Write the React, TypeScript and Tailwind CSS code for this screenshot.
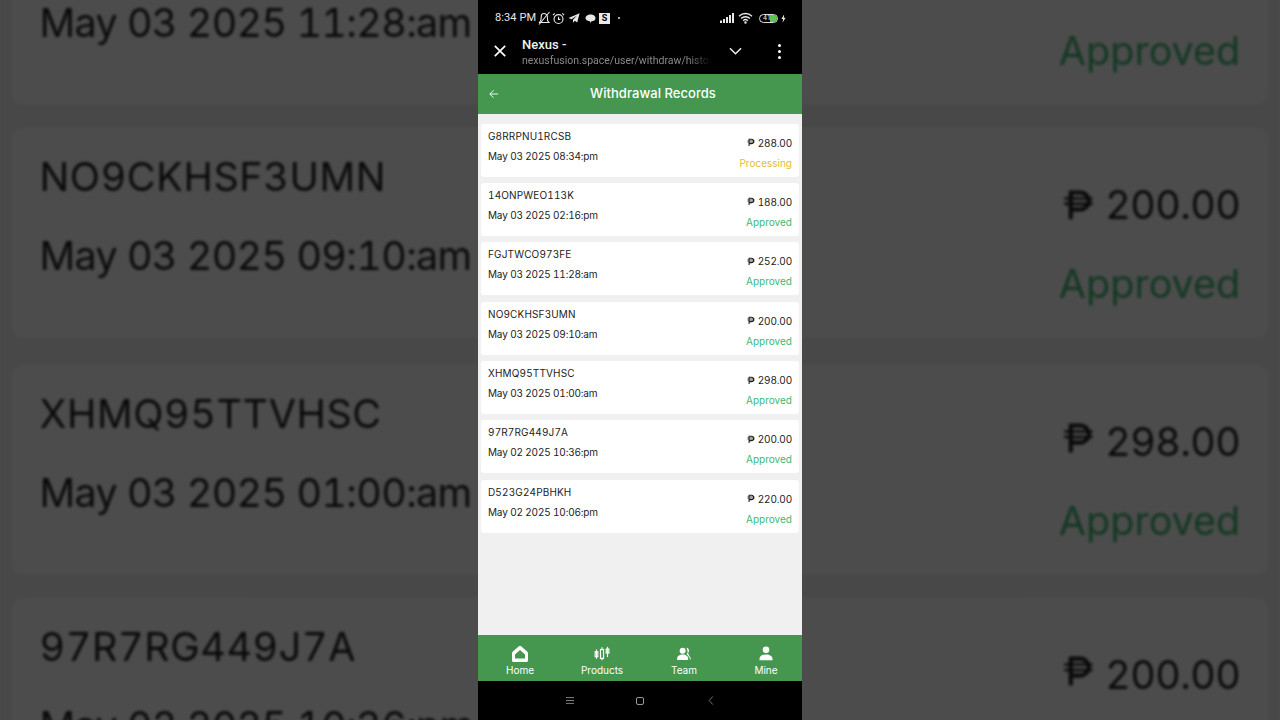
import React from "react";

const rows = [
  ["G8RRPNU1RCSB", "May 03 2025 08:34:pm", "288.00", "Processing"],
  ["14ONPWEO113K", "May 03 2025 02:16:pm", "188.00", "Approved"],
  ["FGJTWCO973FE", "May 03 2025 11:28:am", "252.00", "Approved"],
  ["NO9CKHSF3UMN", "May 03 2025 09:10:am", "200.00", "Approved"],
  ["XHMQ95TTVHSC", "May 03 2025 01:00:am", "298.00", "Approved"],
  ["97R7RG449J7A", "May 02 2025 10:36:pm", "200.00", "Approved"],
  ["D523G24PBHKH", "May 02 2025 10:06:pm", "220.00", "Approved"],
];

function Peso() {
  return (
    <svg viewBox="0 0 10 10" className="w-[8px] h-[9px]" fill="none" stroke="currentColor">
      <path d="M2.6 9.5V1h3a2.6 2.6 0 0 1 0 5.4h-3" strokeWidth="1.3" />
      <path d="M0.5 2.9h9M0.5 4.6h9" strokeWidth="0.8" />
    </svg>
  );
}

function Records() {
  return (
    <div className="flex flex-col gap-[6.4px] px-[3px] font-['Inter','Liberation_Sans',sans-serif] text-[10px] text-[#1c1c1c] tabular-nums">
      {rows.map((r) => (
        <div key={r[0]} className="flex justify-between h-[53px] bg-white rounded-[3px] px-[7px]">
          <div className="flex flex-col gap-[6px] pt-[5px]">
            <div className="h-[14px] leading-[14px] whitespace-nowrap tracking-[0.15px]">{r[0]}</div>
            <div className="h-[14px] leading-[14px] whitespace-nowrap tracking-[-0.17px]">{r[1]}</div>
          </div>
          <div className="flex flex-col items-end gap-[6px] pt-[12px]">
            <div className="h-[14px] leading-[14px] flex items-center gap-[3px]">
              <Peso />
              <span className="tracking-[-0.15px]">{r[2]}</span>
            </div>
            <div className={"h-[14px] leading-[14px] " + (r[3] === "Processing" ? "text-[#e2bd2e]" : "text-[#3db873]")}>{r[3]}</div>
          </div>
        </div>
      ))}
    </div>
  );
}

function StatusBar() {
  return (
    <div className="h-[34px] flex items-center pl-[17px] pr-[16px] text-[#e8e8e8] pt-[2px]">
      <span className="w-[42px] text-[11px] tracking-[0.1px] font-['Roboto',sans-serif] whitespace-nowrap">8:34 PM</span>
      <svg viewBox="0 0 14 14" className="w-[14px] h-[14px]" fill="none" stroke="currentColor" strokeWidth="1.1">
        <path d="M2.500 11.500h9.500l-1.500-2V6a3.500 3.500 0 0 0-6-2.400L3.800 9.500z" />
        <path d="M2 13.500L12.500 1" />
      </svg>
      <svg viewBox="0 0 14 14" className="w-[13px] h-[13px] ml-[1px]" fill="none" stroke="currentColor" strokeWidth="1.2">
        <circle cx="7" cy="7.600" r="4.800" />
        <path d="M7 5v3h2M1 3.400L3 1.400M13 3.400L11 1.400" />
      </svg>
      <svg viewBox="0 0 12 12" className="w-[12px] h-[12px] ml-[3px]" fill="currentColor">
        <path d="M11.600 1.200L0.500 6l3 1.200L9 3.400 5 7.800v3l1.800-2 2.400 1.700z" />
      </svg>
      <svg viewBox="0 0 12 12" className="w-[11px] h-[11px] ml-[5px]" fill="currentColor">
        <path d="M6 1.500c3 0 5.500 1.700 5.500 4S9.500 9 7.200 9L5.500 11V9C2.800 8.800.500 7.600.500 5.500s2.500-4 5.500-4z" />
      </svg>
      <div className="ml-[3px] w-[11px] h-[11px] bg-[#e8e8e8] text-black text-[9px] font-bold leading-[11px] text-center font-['Roboto',sans-serif]">S</div>
      <div className="ml-[8px] w-[2px] h-[2px] rounded-full bg-[#ddd]" />
      <div className="flex-1" />
      <svg viewBox="0 0 14 10" className="w-[14px] h-[10px]" fill="currentColor">
        <rect x="0" y="7.500" width="2" height="2.500" />
        <rect x="3" y="6" width="2" height="4" />
        <rect x="6" y="4" width="2" height="6" />
        <rect x="9" y="2" width="2" height="8" />
        <rect x="12" y="0" width="2" height="10" />
      </svg>
      <svg viewBox="0 0 16 13" className="w-[15px] h-[12px] ml-[4px]" fill="none" stroke="currentColor" strokeWidth="1.500">
        <path d="M1 4.500a10 10 0 0 1 14 0M3.200 7a7 7 0 0 1 9.600 0M5.500 9.400a3.600 3.600 0 0 1 5 0" />
        <circle cx="8" cy="11.500" r="0.600" />
      </svg>
      <div className="ml-[6px] relative w-[19px] h-[9px] rounded-full border border-[#ddd] overflow-hidden flex items-center">
        <div className="absolute right-0 top-0 bottom-0 w-[7px] bg-[#57c84d]" />
        <span className="relative ml-[3px] text-[7px] leading-none font-['Roboto',sans-serif] text-[#eee]">41</span>
      </div>
      <svg viewBox="0 0 6 10" className="w-[5px] h-[9px] ml-[3px]" fill="currentColor">
        <path d="M3.800 0L0.500 5.600h2L1.800 10 5.500 4H3.400z" />
      </svg>
    </div>
  );
}

function BrowserBar() {
  return (
    <div className="h-[40px] flex items-center pb-[6px] font-['Roboto',sans-serif]">
      <div className="w-[44px] flex justify-center">
        <svg viewBox="0 0 12 12" className="w-[12px] h-[12px]" fill="none" stroke="#fff" strokeWidth="1.700">
          <path d="M0.800 0.800l10.400 10.400M11.200 0.800L0.800 11.200" />
        </svg>
      </div>
      <div className="w-[189px] overflow-hidden flex flex-col pt-[4px]">
        <div className="text-[13px] leading-[16px] font-medium text-[#f2f2f2]">Nexus -</div>
        <div className="text-[10.5px] leading-[16px] text-[#8a8a8a] whitespace-nowrap [mask-image:linear-gradient(to_right,black_88%,transparent)]">nexusfusion.space/user/withdraw/history</div>
      </div>
      <div className="ml-[17px] w-[14px] flex justify-center">
        <svg viewBox="0 0 14 8" className="w-[13px] h-[8px]" fill="none" stroke="#eee" strokeWidth="1.600">
          <path d="M1 1l6 6 6-6" />
        </svg>
      </div>
      <div className="ml-[36px] flex flex-col gap-[3px]">
        <div className="w-[3px] h-[3px] rounded-full bg-white" />
        <div className="w-[3px] h-[3px] rounded-full bg-white" />
        <div className="w-[3px] h-[3px] rounded-full bg-white" />
      </div>
    </div>
  );
}

const navFont = "font-['Inter','Liberation_Sans',sans-serif]";

function NavItem({ label, children }: { label: string; children: React.ReactNode }) {
  return (
    <div className="flex flex-col items-center pt-[9px]">
      <div className="h-[19px] flex items-center justify-center">{children}</div>
      <div className="text-[10px] leading-[12px] mt-[1px]">{label}</div>
    </div>
  );
}

export default function App() {
  return (
    <div className="relative w-[1280px] h-[720px] overflow-hidden bg-[#4c4c4c]">
      <div aria-hidden className="absolute left-0 top-[-575px] w-[324px] origin-top-left scale-[3.95] brightness-[0.3] blur-[0.35px] bg-[#f0f0f0] h-[620px]">
        <Records />
      </div>
      <div className="relative mx-auto w-[324px] h-[720px] flex flex-col bg-black">
        <StatusBar />
        <BrowserBar />
        <div className="relative h-[40px] bg-[#45974f] flex items-center justify-center text-white">
          <svg viewBox="0 0 12 12" className="absolute left-[11px] top-[15px] w-[10px] h-[10px]" fill="none" stroke="#fff" strokeWidth="1.100">
            <path d="M11 6H1M5.500 1.500L1 6l4.500 4.500" />
          </svg>
          <span className={"ml-[26px] text-[13px] font-medium tracking-[0.05px] " + navFont}>Withdrawal Records</span>
        </div>
        <div className="flex-1 bg-[#f0f0f0] pt-[9.500px]">
          <Records />
        </div>
        <div className={"h-[46px] bg-[#45974f] text-white grid grid-cols-[repeat(4,82px)] pl-[1px] overflow-hidden " + navFont}>
          <NavItem label="Home">
            <svg viewBox="0 0 18 18" className="w-[18px] h-[18px]" fill="#fff">
              <path fillRule="evenodd" d="M9 .8c.5 0 1 .2 1.400.6l6 5.400c.4.4.6.8.6 1.400v7.300c0 .9-.7 1.500-1.500 1.500h-13C1.700 17 1 16.400 1 15.500V8.200c0-.6.2-1 .6-1.400l6-5.400C8 1 8.500.8 9 .8zM9 5L4 9.500V13.500h10V9.500z" />
            </svg>
          </NavItem>
          <NavItem label="Products">
            <svg viewBox="0 0 18 16" className="w-[16px] h-[15px]" fill="none" stroke="#fff" strokeWidth="1.300">
              <rect x="1.300" y="6" width="3" height="5.500" />
              <path d="M2.800 3.500v10.500" />
              <rect x="7.300" y="3.500" width="3.400" height="10" />
              <path d="M9 1v2.500M9 13.500V15.500" />
              <rect x="13.700" y="3" width="3" height="4.500" />
              <path d="M15.200 0.500V12" />
            </svg>
          </NavItem>
          <NavItem label="Team">
            <svg viewBox="0 0 16 15" className="w-[15px] h-[14px]" fill="#fff">
              <circle cx="6" cy="4" r="3.200" />
              <path d="M0 13c0-3.400 2.700-5 6-5s6 1.600 6 5c0 .5-.3.800-.8.800H.8c-.5 0-.8-.3-.800-.800z" />
              <path d="M10 .9c1.700.1 2.900 1.500 2.900 3.100 0 1-.5 1.900-1.200 2.400l3.300 6.400c.2.400-.2.800-.6.500L12 9.500c-.4-.6-1-1.200-1.800-1.500 1-.9 1.400-2.500 1-4C10.900 2.700 10.400 1.700 10 .9z" />
            </svg>
          </NavItem>
          <NavItem label="Mine">
            <svg viewBox="0 0 14 15" className="w-[14px] h-[15px]" fill="#fff">
              <circle cx="7" cy="3.800" r="3.300" />
              <path d="M0.500 13c0-3 3-4.600 6.500-4.600s6.500 1.600 6.500 4.600v1.200H.500z" />
            </svg>
          </NavItem>
        </div>
        <div className="h-[39px] bg-black flex items-center">
          <svg viewBox="0 0 8 7" className="w-[8px] h-[7px] ml-[88px]" fill="none" stroke="#8c8c8c" strokeWidth="0.900">
            <path d="M0 .6h8M0 3.500h8M0 6.400h8" />
          </svg>
          <div className="ml-[62px] w-[8px] h-[8px] rounded-[2px] border border-[#9a9a9a]" />
          <svg viewBox="0 0 6 10" className="ml-[64px] w-[6px] h-[9px]" fill="none" stroke="#8c8c8c" strokeWidth="0.900">
            <path d="M5 .5L1 5l4 4.500" />
          </svg>
        </div>
      </div>
    </div>
  );
}
